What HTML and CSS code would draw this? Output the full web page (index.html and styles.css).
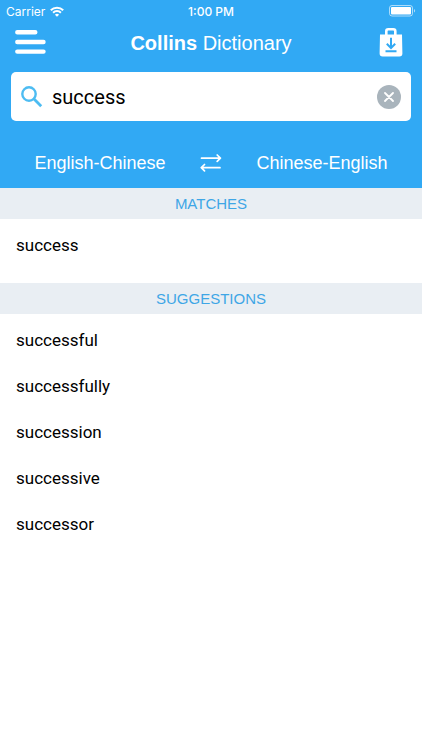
FILE: index.html
```
<!DOCTYPE html>
<html lang="en">
<head>
    <title>Collins Dictionary</title>
    <meta charset="UTF-8">
    <meta name="viewport" content="width=device-width, initial-scale=1">
    <link rel="stylesheet" href="styles.css">
</head>
<body>
    <header class="header">
        <div class="status">
            <div class="carrier">
                <span>Carrier</span>
                <svg width="14" height="11" viewBox="0 0 14 11" fill="none" stroke="#fff" stroke-width="2">
                    <path d="M0.8 4.2a8.8 8.8 0 0 1 12.4 0M3.1 6.7a5.5 5.5 0 0 1 7.8 0"/>
                    <path d="M7 10.8L4.9 8.7a3 3 0 0 1 4.2 0z" fill="#fff" stroke="none"/>
                </svg>
            </div>
            <div class="time">1:00 PM</div>
            <div class="battery">
                <svg width="27" height="12" viewBox="0 0 27 12">
                    <rect x="0.5" y="0.5" width="23" height="10.5" rx="2.5" fill="none" stroke="#fff" stroke-opacity="0.6"/>
                    <rect x="2" y="2" width="20" height="7.5" rx="1" fill="#fff"/>
                    <path d="M25 4v3.6a2 2 0 0 0 0-3.6z" fill="#fff" fill-opacity="0.6"/>
                </svg>
            </div>
        </div>

        <div class="titlebar">
            <button type="button" class="menu" aria-label="Menu">
                <svg width="31" height="26" viewBox="0 0 31 26" stroke="#fff" stroke-width="4.4" stroke-linecap="round">
                    <path d="M2.3 2.3h18M2.3 12h26.2M2.3 21.6h26.2"/>
                </svg>
            </button>
            <h1 class="title"><b>Collins</b> Dictionary</h1>
            <button type="button" class="downloads" aria-label="Downloads">
                <svg width="24" height="31" viewBox="0 0 24 31" fill="none">
                    <path d="M7.3 9V2.8a2 2 0 0 1 2-2h5a2 2 0 0 1 2 2V9" stroke="#fff" stroke-width="2.6" transform="translate(0 .5)"/>
                    <path d="M1 6.6h22l0.4 19a3 3 0 0 1-3 3H3.6a3 3 0 0 1-3-3z" fill="#fff"/>
                    <path d="M12 9.7v10M7.8 15.8l4.2 4.2 4.2-4.2M6.5 23.2h11" stroke="#31a9f4" stroke-width="2"/>
                </svg>
            </button>
        </div>

        <form class="search">
            <svg width="22" height="22" viewBox="0 0 22 22" fill="none" stroke="#4dbcf2" stroke-width="2.4">
                <circle cx="8" cy="8" r="6.7"/>
                <path d="M12.8 12.8l7.4 7.4" stroke-width="2.8"/>
            </svg>
            <input type="text" class="search-input" value="success" aria-label="Search">
            <button type="reset" class="clear" aria-label="Clear">
                <svg width="10" height="10" viewBox="0 0 10 10" stroke="#fff" stroke-width="1.8" stroke-linecap="round">
                    <path d="M1 1l8 8M9 1l-8 8"/>
                </svg>
            </button>
        </form>

        <div class="languages">
            <button type="button" class="language">English-Chinese</button>
            <button type="button" class="swap" aria-label="Swap languages">
                <svg width="22" height="18" viewBox="0 0 22 18" fill="none" stroke="#fff" stroke-width="1.7" stroke-linecap="round" stroke-linejoin="round">
                    <path d="M1.5 4.2h18.8M17.2 1l3.2 3.2-3.2 3.2"/>
                    <path d="M20 13.7H1.5M4.5 10.5l-3.2 3.2 3.2 3.2"/>
                </svg>
            </button>
            <button type="button" class="language">Chinese-English</button>
        </div>
    </header>

    <main>
        <h2 class="section-title">MATCHES</h2>
        <ul class="words matches">
            <li><a href="#">success</a></li>
        </ul>

        <h2 class="section-title">SUGGESTIONS</h2>
        <ul class="words">
            <li><a href="#">successful</a></li>
            <li><a href="#">successfully</a></li>
            <li><a href="#">succession</a></li>
            <li><a href="#">successive</a></li>
            <li><a href="#">successor</a></li>
        </ul>
    </main>
</body>
</html>
```
FILE: styles.css
```
body {
    margin: 0;
    background-color: #fff;
    font-family: Roboto, "Liberation Sans", sans-serif;
}

button {
    padding: 0;
    border: none;
    background: none;
    color: inherit;
    cursor: pointer;
}

svg {
    display: block;
}

/* Blue area with search and languages */
.header {
    background-color: #31a9f4;
    color: #fff;
}

/* Status bar */
.status {
    display: grid;
    grid-template-columns: 1fr auto 1fr;
    align-items: center;
    height: 22px;
    padding: 0 6px;
    font-family: Inter, "Liberation Sans", sans-serif;
    font-size: 12px;
}

.carrier {
    display: flex;
    align-items: center;
    gap: 5px;
}

.time {
    font-weight: 500;
}

.battery {
    justify-self: end;
}

/* Title bar */
.titlebar {
    display: grid;
    grid-template-columns: 1fr auto 1fr;
    align-items: center;
    height: 42px;
    padding: 0 15px;
}

.menu {
    justify-self: start;
}

.downloads {
    justify-self: end;
    padding-right: 4px;
}

.title {
    margin: 0;
    font-family: "Liberation Sans", sans-serif;
    font-size: 20px;
    font-weight: normal;
}

/* Search box */
.search {
    display: flex;
    align-items: center;
    gap: 9px;
    height: 49px;
    margin: 8px 11px 0;
    padding: 0 10px;
    background-color: #fff;
    border-radius: 5px;
    box-sizing: border-box;
}

.search-input {
    flex: 1;
    min-width: 0;
    padding: 0;
    border: none;
    outline: none;
    color: #000;
    font-family: inherit;
    font-size: 20px;
}

.clear {
    display: flex;
    align-items: center;
    justify-content: center;
    width: 24px;
    height: 24px;
    border-radius: 50%;
    background-color: #a9b4bc;
}

/* Language switch */
.languages {
    display: grid;
    grid-template-columns: 1fr 22px 1fr;
    align-items: center;
    height: 67px;
    padding: 17px 0 0;
    box-sizing: border-box;
}

.language {
    font-family: "Liberation Sans", sans-serif;
    font-size: 18px;
}

/* Result lists */
.section-title {
    margin: 0;
    background-color: #e9eef3;
    color: #3ea6e6;
    font-family: "Liberation Sans", sans-serif;
    font-size: 15px;
    font-weight: normal;
    line-height: 31px;
    text-align: center;
}

.words {
    margin: 0;
    padding: 3px 0 0;
    list-style: none;
}

.matches {
    padding-bottom: 15px;
}

.words a {
    display: block;
    padding: 0 16px;
    color: #000;
    font-size: 17px;
    line-height: 46px;
    text-decoration: none;
}
```
